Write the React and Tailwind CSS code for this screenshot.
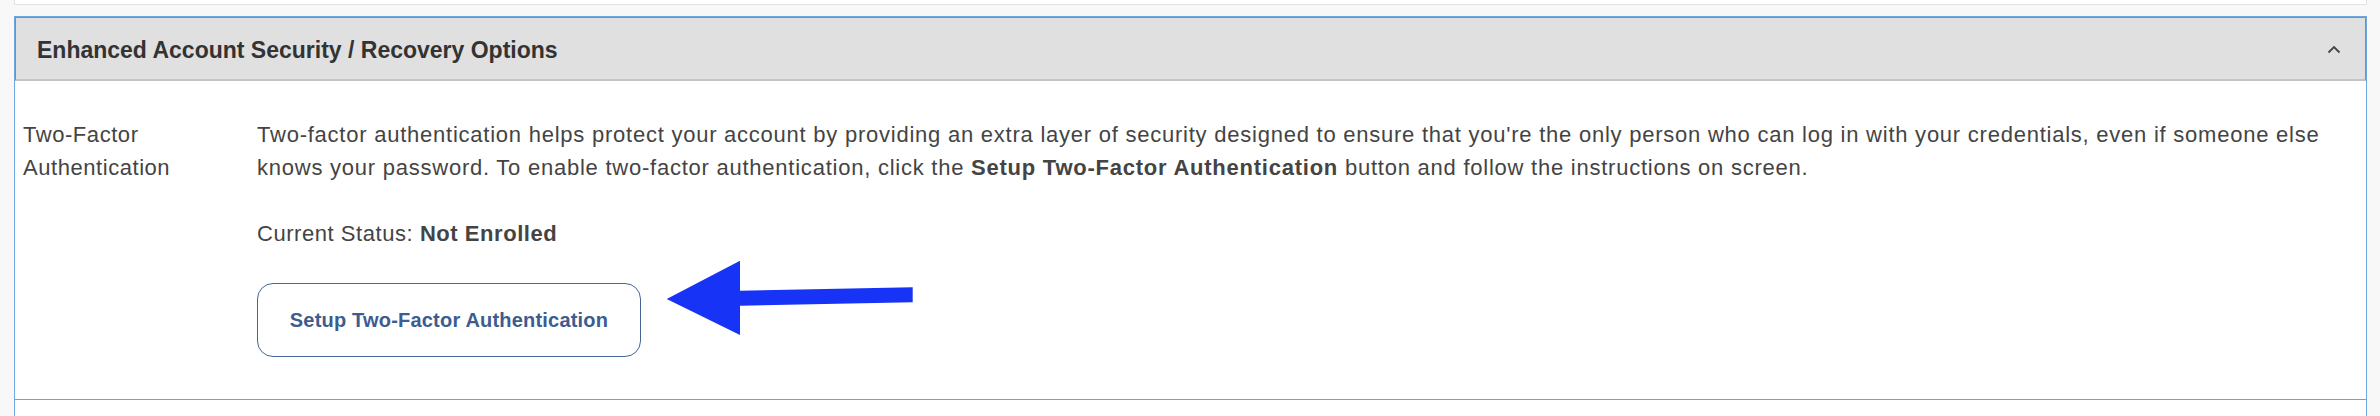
export default function App() {
  return (
    <div className="min-h-screen bg-[#f8f8f8] pl-[14px] pr-[13px] font-['Liberation_Sans',Arial,sans-serif]">
      {/* previous panel edge */}
      <div className="h-[5px] bg-white border-x border-b border-[#e3e3e3]" />

      <div className="mt-[11px] border border-[#6fa8dc] bg-white">
        {/* Header */}
        <div className="h-[64px] bg-[#e0e0e0] border-t border-x border-[#8c8c8c] border-b-2 border-b-[#c4c4c4] flex items-center justify-between pl-[21px] pr-[24px] pt-[3px]">
          <h2 className="text-[23px] font-bold text-[#333]">Enhanced Account Security / Recovery Options</h2>
          <svg width="14" height="9" viewBox="0 0 14 9" className="mb-[2px]">
            <polyline points="1.5,7.5 7,2 12.5,7.5" fill="none" stroke="#444" strokeWidth="1.8" />
          </svg>
        </div>

        {/* Body */}
        <div className="flex pl-[8px] pr-[16px] pt-[37px] pb-[42px] border-b border-[#999] text-[22px] leading-[33px] text-[#444]">
          <div className="w-[234px] shrink-0 tracking-[0.55px]">
            Two-Factor
            <br />
            Authentication
          </div>
          <div className="flex-1">
            <p className="tracking-[0.76px]">
              Two-factor authentication helps protect your account by providing an extra layer of security designed to
              ensure that you're the only person who can log in with your credentials, even if someone else knows your
              password. To enable two-factor authentication, click the <b>Setup Two-Factor Authentication</b> button and
              follow the instructions on screen.
            </p>
            <p className="mt-[33px] tracking-[0.55px]">
              Current Status: <b>Not Enrolled</b>
            </p>
            <div className="relative mt-[33px]">
              <button className="w-[384px] h-[74px] rounded-[16px] border border-[#46669a] bg-white text-[20px] leading-none tracking-[0.2px] font-bold text-[#3d5c8f]">
                Setup Two-Factor Authentication
              </button>
              <svg
                className="absolute left-[403px] top-[-29px]"
                width="260"
                height="90"
                viewBox="0 0 260 90"
              >
                <polygon
                  points="6.7,45 80,6.7 80,36.7 252.7,33.3 252.7,48.3 80,51.7 80,81"
                  fill="#1733f5"
                />
              </svg>
            </div>
          </div>
        </div>

        <div className="h-[20px]" />
      </div>
    </div>
  );
}
